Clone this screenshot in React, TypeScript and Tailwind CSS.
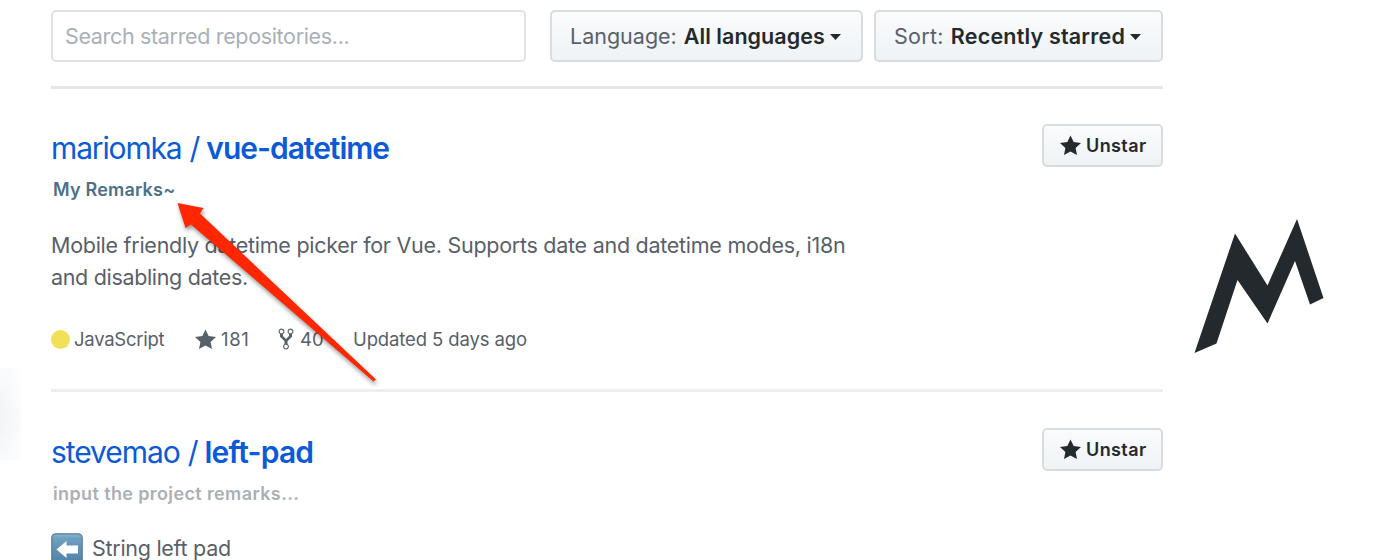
import React from "react";

const BTN =
  "flex items-center rounded-[5px] border-2 border-[#d9dcdf] bg-linear-to-b from-[#fafbfc] to-[#eff3f6] whitespace-nowrap";

function Star({ className }: { className: string }) {
  return (
    <svg viewBox="0 0 14 16" className={className} fill="currentColor" preserveAspectRatio="none">
      <path d="M14 6l-4.9-.64L7 1 4.9 5.36 0 6l3.6 3.26L2.67 14 7 11.67 11.33 14l-.93-4.74z" />
    </svg>
  );
}

function Fork({ className }: { className: string }) {
  return (
    <svg viewBox="0 0 10 16" className={className} fill="currentColor">
      <path d="M8 1a1.993 1.993 0 0 0-1 3.72V6L5 8 3 6V4.72A1.993 1.993 0 0 0 2 1a1.993 1.993 0 0 0-1 3.72V6.5l3 3v1.78A1.993 1.993 0 0 0 5 15a1.993 1.993 0 0 0 1-3.72V9.5l3-3V4.72A1.993 1.993 0 0 0 8 1zM2 4.2C1.34 4.2.8 3.65.8 3c0-.65.55-1.2 1.2-1.2.65 0 1.2.55 1.2 1.2 0 .65-.55 1.2-1.2 1.2zm3 10c-.66 0-1.2-.55-1.2-1.2 0-.65.55-1.2 1.2-1.2.65 0 1.2.55 1.2 1.2 0 .65-.55 1.2-1.2 1.2zm3-10c-.66 0-1.2-.55-1.2-1.2 0-.65.55-1.2 1.2-1.2.65 0 1.2.55 1.2 1.2 0 .65-.55 1.2-1.2 1.2z" />
    </svg>
  );
}

function Caret() {
  return (
    <svg viewBox="0 0 10 6" className="ml-[5px] mt-[1px] h-[6px] w-[11px] shrink-0" fill="#24292e" preserveAspectRatio="none">
      <path d="M0 0h10L5 6z" />
    </svg>
  );
}

function Unstar() {
  return (
    <button className={`${BTN} h-[43px] w-[121px] pl-[16px] text-[#24292e]`}>
      <Star className="h-[24px] w-[21px] shrink-0" />
      <span className="ml-[5px] text-[18px] font-semibold tracking-[0.4px]">Unstar</span>
    </button>
  );
}

function ArrowEmoji() {
  return (
    <svg viewBox="0 0 32 32" className="h-[32px] w-[32px] shrink-0">
      <defs>
        <linearGradient id="tile" x1="0" y1="0" x2="0" y2="1">
          <stop offset="0" stopColor="#8fb5ce" />
          <stop offset="0.15" stopColor="#6fa0c1" />
          <stop offset="1" stopColor="#4d7fa4" />
        </linearGradient>
      </defs>
      <rect x="0.8" y="0.8" width="30.4" height="30.4" rx="4" fill="url(#tile)" stroke="#557e9b" strokeWidth="1.2" />
      <path d="M5.500 16.500L15.500 8v4.500h11.500v8H15.500V25z" fill="#fff" />
    </svg>
  );
}

export default function App() {
  return (
    <div className="relative flex h-[560px] w-[1400px] overflow-hidden bg-white font-['Inter',sans-serif] text-[#586069]">
      <div className="mt-[368px] h-[92px] w-[21px] shrink-0 bg-[radial-gradient(ellipse_at_0%_55%,#f1f3f5_0%,#f9fafb_55%,#ffffff_100%)]" />
      <main className="ml-[30px] w-[1112px] shrink-0 pt-[10px]">
        <header className="flex h-[79px] items-start border-b-3 border-[#e4e7ea]">
          <div className="flex h-[52px] w-[475px] items-center rounded-[5px] border-2 border-[#dfe2e5] pl-[12px] text-[21.5px] tracking-[-0.34px] text-[#a9b0b7]">
            Search starred repositories...
          </div>
          <button className={`${BTN} ml-[24px] h-[52px] w-[313px] pl-[18px] text-[21.5px] text-[#586069]`}>
            <span>Language:</span>
            <span className="ml-[7px] font-semibold tracking-[0.05px] text-[#24292e]">All languages</span>
            <Caret />
          </button>
          <button className={`${BTN} ml-[11px] h-[52px] w-[289px] pl-[18px] text-[21.5px] text-[#586069]`}>
            <span className="tracking-[0.3px]">Sort:</span>
            <span className="ml-[7px] font-semibold tracking-[0.19px] text-[#24292e]">Recently starred</span>
            <Caret />
          </button>
        </header>

        <section className="flex h-[303px] justify-between border-b-3 border-[#eceef0] pt-[35px]">
          <div>
            <h3 className="flex h-[48px] items-center text-[30px] whitespace-nowrap text-[#0b5ad8]">
              <span className="tracking-[-1.15px]">mariomka</span>
              <span className="ml-[8px]">/</span>
              <b className="ml-[6px] font-semibold tracking-[-1.02px]">vue-datetime</b>
            </h3>
            <p className="ml-[2px] flex h-[34px] items-center text-[18px] font-semibold tracking-[0.2px] text-[#4c7088]">My Remarks~</p>
            <p className="mt-[23px] text-[21.5px] leading-[32px] tracking-[-0.27px] whitespace-nowrap">
              Mobile friendly datetime picker for Vue. Supports date and datetime modes, i18n
              <br />
              <span className="tracking-[-0.33px]">and disabling dates.</span>
            </p>
            <div className="mt-[33px] flex h-[28px] items-center text-[18.5px] whitespace-nowrap">
              <i className="mb-[2px] h-[19px] w-[19px] rounded-full bg-[#f1e05a]" />
              <span className="ml-[4px] w-[121px] tracking-[-0.25px]">JavaScript</span>
              <Star className="h-[24px] w-[21px] shrink-0" />
              <span className="ml-[5px] w-[57px] tracking-[0.7px]">181</span>
              <Fork className="mb-[2px] h-[24px] w-[16px] shrink-0" />
              <span className="ml-[6px] w-[53px]">40</span>
              <span className="tracking-[-0.12px]">Updated 5 days ago</span>
            </div>
          </div>
          <Unstar />
        </section>

        <section className="flex justify-between pt-[36px]">
          <div>
            <h3 className="flex h-[48px] items-center text-[30px] whitespace-nowrap text-[#0b5ad8]">
              <span className="tracking-[-1.05px]">stevemao</span>
              <span className="ml-[8px]">/</span>
              <b className="ml-[6px] font-semibold tracking-[-0.8px]">left-pad</b>
            </h3>
            <p className="ml-[2px] flex h-[34px] items-center text-[18px] font-semibold tracking-[0.38px] text-[#aab0b6]">input the project remarks...</p>
            <p className="mt-[22px] flex h-[34px] items-center text-[21.5px] tracking-[-0.28px] whitespace-nowrap">
              <ArrowEmoji />
              <span className="mb-[2px] ml-[9px]">String left pad</span>
            </p>
          </div>
          <Unstar />
        </section>
      </main>
      <svg viewBox="0 0 130 134" className="mt-[219px] ml-[31px] h-[134px] w-[130px] shrink-0" fill="#24292e">
        <path d="M0.5 134L41 14.5L73.500 66.500L103 0L129.500 79L116 85.500L101 42L73.500 104.500L43.500 61L22.500 124.500Z" />
      </svg>
      <svg viewBox="0 0 220 200" className="pointer-events-none absolute top-[195px] left-[170px] h-[200px] w-[220px] drop-shadow-[1px_3px_2px_rgba(0,0,0,0.4)]" fill="#ff2600">
        <path d="M7.500 8L33.500 13L30 18.500L206 184.500L203.500 186.500L21 29.500L15.500 33Z" />
      </svg>
    </div>
  );
}
